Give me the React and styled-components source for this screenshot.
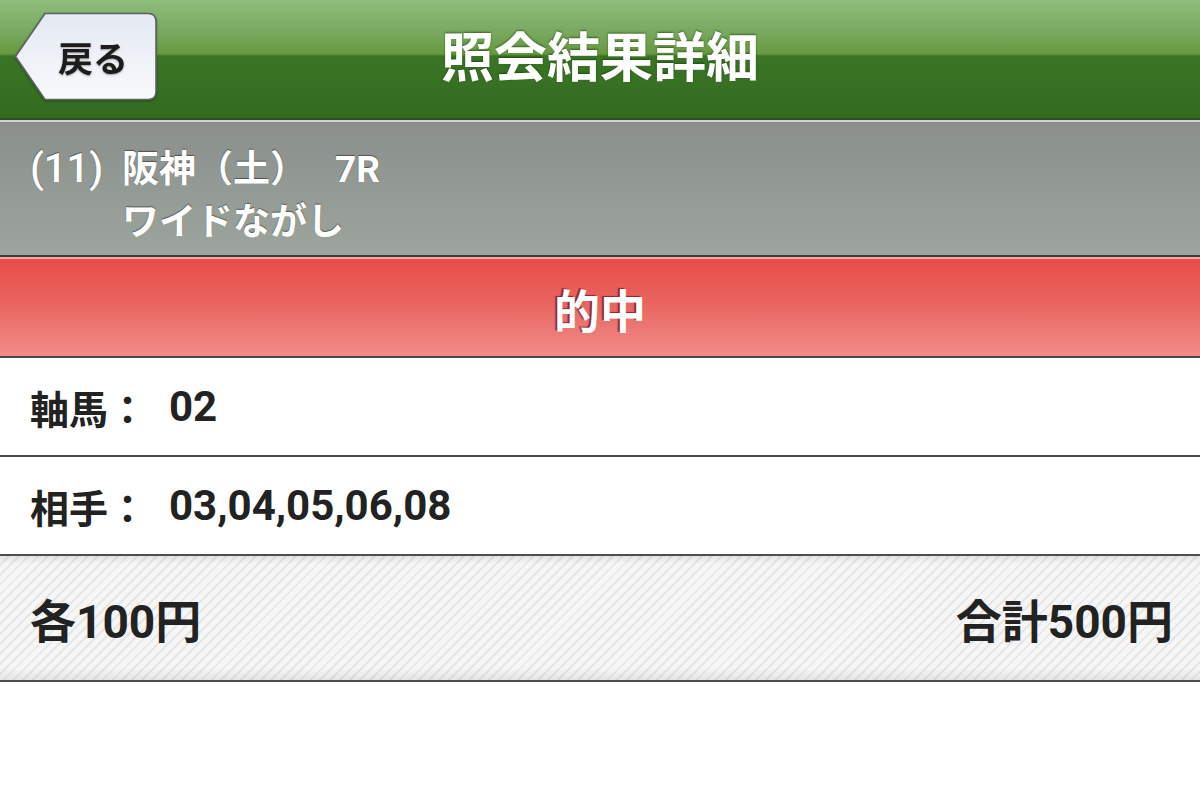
import styled, { createGlobalStyle } from "styled-components";

const GlobalStyle = createGlobalStyle`
  html, body {
    margin: 0;
    padding: 0;
    background: #ffffff;
  }
  body {
    font-family: Roboto, "Noto Sans CJK JP", sans-serif;
    -webkit-font-smoothing: antialiased;
  }
`;

const BackShape = () => (
  <svg width="144" height="90" viewBox="0 0 144 90">
    <defs>
      <linearGradient id="backFill" x1="0" y1="0" x2="0" y2="1">
        <stop offset="0" stopColor="#e4e9f2" />
        <stop offset="1" stopColor="#f8f9fc" />
      </linearGradient>
    </defs>
    <path
      d="M31 1.5 H134 Q142 1.5 142 9.5 V79.5 Q142 87.5 134 87.5 H31 L1.5 44.5 Z"
      fill="url(#backFill)"
      stroke="#5f6165"
      strokeWidth="1.6"
    />
  </svg>
);

const App = () => {
  return (
    <>
      <GlobalStyle />
      <Page>
        <Header>
          <BackButton>
            <BackShape />
            <BackLabel>戻る</BackLabel>
          </BackButton>
          <Title>照会結果詳細</Title>
        </Header>

        <RaceInfo>
          <RaceLine>
            <RaceNo>(11)</RaceNo>
            <span>阪神（土）</span>
            <RaceNum>7R</RaceNum>
          </RaceLine>
          <RaceLine $indent>ワイドながし</RaceLine>
        </RaceInfo>

        <ResultBar>的中</ResultBar>

        <Row>
          <Label>軸馬：</Label>
          <Value>02</Value>
        </Row>
        <Row>
          <Label>相手：</Label>
          <Value>03,04,05,06,08</Value>
        </Row>

        <Summary>
          <span>各100円</span>
          <span>合計500円</span>
        </Summary>
      </Page>
    </>
  );
};

export default App;

const Page = styled.div`
  width: 1200px;
  min-height: 810px;
  background: #ffffff;
  display: flex;
  flex-direction: column;
`;

const Header = styled.header`
  position: relative;
  height: 118px;
  display: flex;
  align-items: center;
  justify-content: center;
  background: linear-gradient(
    to bottom,
    #8fbd7b 0px,
    #7aaa62 30px,
    #67993f 54px,
    #3a7525 56px,
    #336b1f 117px
  );
  border-bottom: 2px solid #37462f;
`;

const BackButton = styled.div`
  position: absolute;
  left: 14px;
  top: 12px;
  width: 144px;
  height: 90px;
  filter: drop-shadow(0 1px 1px rgba(0, 0, 0, 0.35));

  svg {
    display: block;
  }
`;

const BackLabel = styled.span`
  position: absolute;
  inset: 0;
  display: flex;
  align-items: center;
  justify-content: center;
  padding-left: 14px;
  padding-bottom: 2px;
  font-size: 35px;
  font-weight: 700;
  color: #1c1c1c;
  text-shadow: 0 1px 2px rgba(0, 0, 0, 0.35);
`;

const Title = styled.h1`
  margin: 0 0 10px;
  font-size: 53px;
  font-weight: 700;
  color: #ffffff;
  text-shadow: 0 -1px 2px rgba(20, 50, 10, 0.6);
`;

const RaceInfo = styled.section`
  height: 137px;
  padding: 20px 0 0 30px;
  box-sizing: border-box;
  background: linear-gradient(to bottom, #8a8f8b, #9da49d);
  border-top: 2px solid #cfd2cf;
  border-bottom: 2px solid #3b3d3b;
  color: #ffffff;
  font-size: 37px;
  font-weight: 700;
  text-shadow: 0 -1px 1px rgba(0, 0, 0, 0.45);
`;

const RaceLine = styled.div`
  display: flex;
  align-items: baseline;
  height: 54px;
  line-height: 54px;
  padding-left: ${(p) => (p.$indent ? "92px" : "0")};
`;

const RaceNo = styled.span`
  width: 92px;
  font-size: 40px;
  font-weight: 500;
`;

const RaceNum = styled.span`
  margin-left: 28px;
`;

const ResultBar = styled.section`
  height: 97px;
  display: flex;
  align-items: center;
  justify-content: center;
  background: linear-gradient(to bottom, #e84d48, #e9645f 45%, #f08d8a);
  border-top: 2px solid #f4a7a4;
  border-bottom: 2px solid #4a4646;
  color: #ffffff;
  font-size: 46px;
  font-weight: 700;
  text-shadow: -2px -1px 1px rgba(110, 20, 20, 0.75);
`;

const Row = styled.div`
  height: 97px;
  display: flex;
  align-items: center;
  padding-left: 30px;
  border-bottom: 2px solid #4e4e4e;
  color: #222222;
  font-size: 42px;
  font-weight: 700;
`;

const Label = styled.span`
  font-size: 39px;
`;

const Value = styled.span`
  margin-left: 22px;
`;

const Summary = styled.div`
  height: 124px;
  display: flex;
  align-items: center;
  justify-content: space-between;
  padding: 0 27px 0 30px;
  border-bottom: 2px solid #4e4e4e;
  color: #222222;
  font-size: 46px;
  font-weight: 700;
  background:
    linear-gradient(
      to bottom,
      rgba(0, 0, 0, 0.08) 0px,
      rgba(0, 0, 0, 0) 8px,
      rgba(0, 0, 0, 0) 112px,
      rgba(0, 0, 0, 0.07) 124px
    ),
    repeating-linear-gradient(
      -45deg,
      #f6f6f6 0px,
      #f6f6f6 5px,
      #e6e6e6 5px,
      #e6e6e6 7px
    );
`;
